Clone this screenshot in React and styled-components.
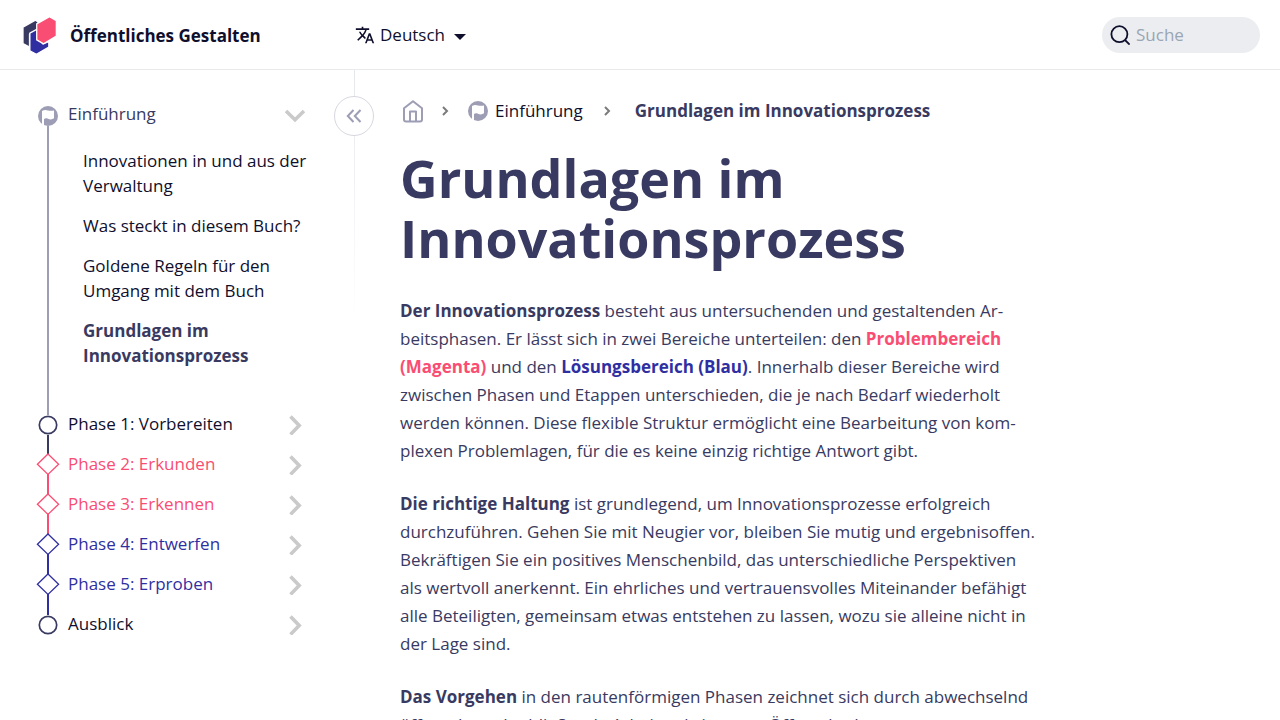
import React from 'react';
import styled, { createGlobalStyle } from 'styled-components';
import { MdTranslate } from 'react-icons/md';

const ink = '#0f0f2d';
const navy = '#393a61';
const lavender = '#9d9db5';
const magenta = '#fa4d73';
const blue = '#2f2fa2';

const GlobalStyle = createGlobalStyle`
  *, *::before, *::after { box-sizing: border-box; }
  body {
    margin: 0;
    background: #fff;
    color: ${ink};
    font-family: "Open Sans", "Noto Sans", sans-serif;
    font-size: 17px;
    line-height: 25px;
  }
  a { color: inherit; text-decoration: none; }
  button { padding: 0; border: 0; background: none; cursor: pointer; }
  ul, ol { margin: 0; padding: 0; list-style: none; }
  svg { display: block; flex: none; }
`;

const Header = styled.header`
  display: flex;
  align-items: center;
  height: 70px;
  padding-right: 20px;
  border-bottom: 1px solid #e9eaec;
`;

const Brand = styled.a`
  display: flex;
  align-items: center;
  gap: 13px;
  width: 355px;
  padding: 2px 0 0 22px;
  font-weight: 700;
`;

const Language = styled.label`
  display: flex;
  align-items: center;
  gap: 5px;
`;

const LanguageSelect = styled.select`
  appearance: none;
  padding: 0;
  border: 0;
  background: none;
  color: inherit;
  font: inherit;
`;

const Caret = styled.span`
  margin: 4px 0 0 3px;
  border: 6px solid transparent;
  border-top-color: currentColor;
  border-bottom-width: 0;
`;

const Search = styled.label`
  display: flex;
  align-items: center;
  gap: 6px;
  width: 158px;
  height: 36px;
  margin-left: auto;
  padding: 0 8px;
  border-radius: 18px;
  background: #ebedf0;
`;

const SearchInput = styled.input`
  flex: 1;
  min-width: 0;
  padding: 0;
  border: 0;
  outline: 0;
  background: none;
  color: ${ink};
  font: inherit;
  &::placeholder { color: #9aa5b5; opacity: 1; }
`;

const Page = styled.div`
  display: flex;
  align-items: stretch;
`;

const Sidebar = styled.aside`
  position: relative;
  flex: none;
  width: 355px;
  padding: 24px 40px 24px 37px;
  background: linear-gradient(#e6e7ec, #fff) right top / 1px 250px no-repeat;
`;

const CollapseButton = styled.button`
  position: absolute;
  top: 26px;
  right: -19px;
  display: grid;
  place-items: center;
  width: 40px;
  height: 40px;
  border: 1px solid #d7d7e1;
  border-radius: 50%;
  background: #fff;
`;

const Phase = styled.li`
  display: flex;
  gap: 9px;
`;

const Rail = styled.div`
  display: flex;
  flex-direction: column;
  align-items: center;
  width: 22px;
`;

const Lead = styled.span`
  width: 2px;
  height: ${(p) => p.$height}px;
  background: ${(p) => p.$color || 'transparent'};
`;

const Tail = styled.span`
  flex: 1;
  width: 2px;
  background: ${(p) => p.$color || 'transparent'};
`;

const PhaseBody = styled.div`
  flex: 1;
`;

const PhaseRow = styled.div`
  display: flex;
  align-items: center;
  justify-content: space-between;
  height: 40px;
  padding-right: 10px;
  color: ${(p) => p.$color};
`;

const PhaseLink = styled.a`
  padding-bottom: 2px;
`;

const Expander = styled.button`
  display: grid;
  place-items: center;
  width: 20px;
  height: 38px;
  padding-top: 2px;
`;

const Chapters = styled.ul`
  display: flex;
  flex-direction: column;
  gap: 15px;
  padding: 14px 0 36px 15px;
`;

const ChapterLink = styled.a`
  display: block;
  color: ${(p) => (p.$active ? navy : ink)};
  font-weight: ${(p) => (p.$active ? 700 : 400)};
`;

const Main = styled.main`
  flex: 1;
  min-width: 0;
  padding: 26px 45px 48px;
`;

const Breadcrumbs = styled.ol`
  display: flex;
  align-items: center;
  height: 30px;
`;

const Crumb = styled.li`
  display: flex;
  align-items: center;
`;

const CrumbLink = styled.a`
  display: flex;
  align-items: center;
  gap: 2px;
`;

const CrumbText = styled.span`
  padding: 0 5px 2px;
  color: ${(p) => (p.$current ? navy : ink)};
  font-weight: ${(p) => (p.$current ? 700 : 400)};
`;

const Separator = styled.span`
  display: grid;
  place-items: center;
  width: 42px;
`;

const Title = styled.h1`
  max-width: 640px;
  margin: 22px 0 29px;
  color: ${navy};
  font-size: 52px;
  line-height: 60px;
  font-weight: 700;
`;

const Paragraph = styled.p`
  margin: 0 0 25px;
  color: ${navy};
  line-height: 28px;
  white-space: nowrap;
`;

const Term = styled.strong`
  color: ${(p) => p.$color || 'inherit'};
  font-weight: 700;
`;

const Logo = () => (
  <svg width="35" height="39" viewBox="37 45 107 119" aria-hidden="true">
    <g stroke="#fff" strokeWidth="4" strokeLinejoin="round">
      <path d="M40 79 78 58 86 63V96L60 100V140L40 129Z" fill={navy} />
      <path d="M61 97 82 86 100 130 119 123V140L81 162 61 151Z" fill={blue} />
      <path d="M82 69 121 47 142 59V106L103 130 82 118Z" fill={magenta} />
    </g>
  </svg>
);

const FlagIcon = () => (
  <svg width="20" height="20" viewBox="0 0 20 20" aria-hidden="true">
    <circle cx="10" cy="10" r="10" fill={lavender} />
    <path d="M4 5C6 3.6 8 3.8 10 4.4S14 5 16 4.5V12.3C14 13.8 12 13.6 10 12.8S7.4 12.3 6 12.9V19H4Z" fill="#fff" />
  </svg>
);

const StepIcon = ({ shape, color }) => {
  if (shape === 'flag') return <FlagIcon />;
  return (
    <svg width="22" height="20" viewBox="0 0 22 20" overflow="visible" fill="#fff" stroke={color} aria-hidden="true">
      {shape === 'circle' ? (
        <circle cx="11" cy="10" r="8.7" strokeWidth="1.7" />
      ) : (
        <path d="M11 0 21.6 10.2 11 20.4 .4 10.2Z" strokeWidth="1.3" />
      )}
    </svg>
  );
};

const Chevron = ({ open }) => (
  <svg width="20" height="20" viewBox="0 0 20 20" fill="none" stroke="#cacaca" strokeWidth="3.6" aria-hidden="true">
    <path d={open ? 'M1 6 10 14.7 19 6' : 'M5.5 1.4 14.2 10.4 5.5 19.4'} />
  </svg>
);

const SmallChevron = () => (
  <svg width="14" height="14" viewBox="0 0 14 14" fill="none" stroke="#7b7b7b" strokeWidth="2" aria-hidden="true">
    <path d="M3 3 7 7 3 11" />
  </svg>
);

const HomeIcon = () => (
  <svg width="26" height="26" viewBox="0 0 26 26" fill="none" stroke={lavender} strokeWidth="2" strokeLinejoin="round" aria-hidden="true">
    <path d="M4 10.2 13 3.2 22 10.2V21.5Q22 23.5 20 23.5H6Q4 23.5 4 21.5Z" />
    <path d="M10 23.5V13.5H16V23.5" />
  </svg>
);

const phases = [
  {
    label: 'Einführung', shape: 'flag', color: navy, line: lavender, lead: 12, open: true,
    chapters: [
      'Innovationen in und aus der Verwaltung',
      'Was steckt in diesem Buch?',
      'Goldene Regeln für den Umgang mit dem Buch',
      'Grundlagen im Innovationsprozess',
    ],
  },
  { label: 'Phase 1: Vorbereiten', shape: 'circle', color: ink, line: navy, lead: 11 },
  { label: 'Phase 2: Erkunden', shape: 'diamond', color: magenta, line: magenta, lead: 10 },
  { label: 'Phase 3: Erkennen', shape: 'diamond', color: magenta, line: magenta, lead: 10 },
  { label: 'Phase 4: Entwerfen', shape: 'diamond', color: blue, line: blue, lead: 10 },
  { label: 'Phase 5: Erproben', shape: 'diamond', color: blue, line: blue, lead: 10 },
  { label: 'Ausblick', shape: 'circle', color: ink, line: navy, lead: 11 },
];

export default function App() {
  return (
    <>
      <GlobalStyle />
      <Header>
        <Brand href="#">
          <Logo />
          Öffentliches Gestalten
        </Brand>
        <Language>
          <MdTranslate size={20} aria-hidden="true" />
          <LanguageSelect aria-label="Sprache" defaultValue="de">
            <option value="de">Deutsch</option>
            <option value="en">English</option>
          </LanguageSelect>
          <Caret />
        </Language>
        <Search>
          <svg width="20" height="20" viewBox="0 0 20 20" fill="none" stroke={ink} strokeWidth="1.8" aria-hidden="true">
            <circle cx="9.4" cy="9.2" r="8" />
            <path d="M15 15 19.6 19.6" />
          </svg>
          <SearchInput type="search" placeholder="Suche" aria-label="Suche" />
        </Search>
      </Header>
      <Page>
        <Sidebar>
          <nav aria-label="Kapitel">
            <ul>
              {phases.map((phase, i) => (
                <Phase key={phase.label}>
                  <Rail>
                    <Lead $height={phase.lead} $color={i > 0 ? phases[i - 1].line : undefined} />
                    <StepIcon shape={phase.shape} color={phase.line} />
                    <Tail $color={i < phases.length - 1 ? phase.line : undefined} />
                  </Rail>
                  <PhaseBody>
                    <PhaseRow $color={phase.color}>
                      <PhaseLink href="#">{phase.label}</PhaseLink>
                      <Expander aria-label={`${phase.label} umschalten`} aria-expanded={!!phase.open}>
                        <Chevron open={phase.open} />
                      </Expander>
                    </PhaseRow>
                    {phase.chapters && (
                      <Chapters>
                        {phase.chapters.map((chapter, n) => (
                          <li key={chapter}>
                            <ChapterLink href="#" $active={n === 3}>{chapter}</ChapterLink>
                          </li>
                        ))}
                      </Chapters>
                    )}
                  </PhaseBody>
                </Phase>
              ))}
            </ul>
          </nav>
          <CollapseButton aria-label="Seitenleiste einklappen">
            <svg width="16" height="14" viewBox="0 0 16 14" fill="none" stroke={lavender} strokeWidth="2" aria-hidden="true">
              <path d="M7.5 1 1.8 7 7.5 13M14.5 1 8.8 7 14.5 13" />
            </svg>
          </CollapseButton>
        </Sidebar>
        <Main>
          <nav aria-label="Brotkrumen">
            <Breadcrumbs>
              <Crumb>
                <CrumbLink href="#" aria-label="Startseite"><HomeIcon /></CrumbLink>
                <Separator><SmallChevron /></Separator>
              </Crumb>
              <Crumb>
                <CrumbLink href="#"><FlagIcon /><CrumbText>Einführung</CrumbText></CrumbLink>
                <Separator><SmallChevron /></Separator>
              </Crumb>
              <Crumb>
                <CrumbText $current>Grundlagen im Innovationsprozess</CrumbText>
              </Crumb>
            </Breadcrumbs>
          </nav>
          <Title>Grundlagen im Innovationsprozess</Title>
          <Paragraph>
            <Term>Der Innovationsprozess</Term> besteht aus untersuchenden und gestaltenden Ar-<br />
            beitsphasen. Er lässt sich in zwei Bereiche unterteilen: den <Term $color={magenta}>Problembereich<br />
            (Magenta)</Term> und den <Term $color={blue}>Lösungsbereich (Blau)</Term>. Innerhalb dieser Bereiche wird<br />
            zwischen Phasen und Etappen unterschieden, die je nach Bedarf wiederholt<br />
            werden können. Diese flexible Struktur ermöglicht eine Bearbeitung von kom-<br />
            plexen Problemlagen, für die es keine einzig richtige Antwort gibt.
          </Paragraph>
          <Paragraph>
            <Term>Die richtige Haltung</Term> ist grundlegend, um Innovationsprozesse erfolgreich<br />
            durchzuführen. Gehen Sie mit Neugier vor, bleiben Sie mutig und ergebnisoffen.<br />
            Bekräftigen Sie ein positives Menschenbild, das unterschiedliche Perspektiven<br />
            als wertvoll anerkennt. Ein ehrliches und vertrauensvolles Miteinander befähigt<br />
            alle Beteiligten, gemeinsam etwas entstehen zu lassen, wozu sie alleine nicht in<br />
            der Lage sind.
          </Paragraph>
          <Paragraph>
            <Term>Das Vorgehen</Term> in den rautenförmigen Phasen zeichnet sich durch abwechselnd<br />
            öffnende und schließende Arbeitsschritte aus. Öffnen bedeutet, etwas zu
          </Paragraph>
        </Main>
      </Page>
    </>
  );
}
